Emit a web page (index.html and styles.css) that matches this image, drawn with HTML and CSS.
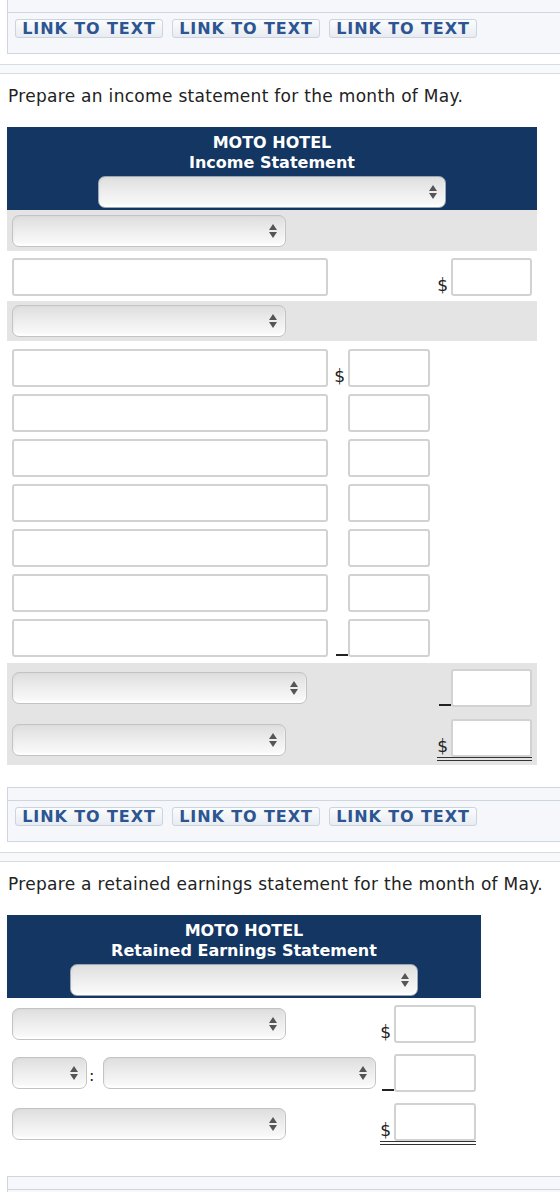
FILE: index.html
```html
<!DOCTYPE html>
<html lang="en">
<head>
<meta charset="utf-8">
<title>Moto Hotel statements</title>
<link rel="stylesheet" href="styles.css">
</head>
<body>

<div class="toolbar toolbar-first">
  <div class="toolbar-strip"></div>
  <div class="toolbar-links">
    <button class="link-btn">LINK TO TEXT</button>
    <button class="link-btn">LINK TO TEXT</button>
    <button class="link-btn">LINK TO TEXT</button>
  </div>
</div>
<div class="band"></div>

<p class="prompt">Prepare an income statement for the month of May.</p>

<div class="stmt stmt-income">
  <div class="stmt-head">
    <div class="title">MOTO HOTEL</div>
    <div class="title">Income Statement</div>
    <div class="select select-head">
      <svg class="arrows" viewBox="0 0 8 14" width="8" height="14"><path d="M0 6 4 0 8 6z M0 8 4 14 8 8z"/></svg>
    </div>
  </div>

  <div class="grow row-sel">
    <div class="select select-md">
      <svg class="arrows" viewBox="0 0 8 14" width="8" height="14"><path d="M0 6 4 0 8 6z M0 8 4 14 8 8z"/></svg>
    </div>
  </div>

  <div class="grid row-first">
    <div class="c-label"><input class="field field-label" type="text"></div>
    <div class="c-amt c-mid"></div>
    <div class="c-amt c-right"><span class="dollar">$</span><input class="field field-amt" type="text"></div>
  </div>

  <div class="grow row-sel row-sel2">
    <div class="select select-md">
      <svg class="arrows" viewBox="0 0 8 14" width="8" height="14"><path d="M0 6 4 0 8 6z M0 8 4 14 8 8z"/></svg>
    </div>
  </div>

  <div class="lines">
    <div class="grid">
      <div class="c-label"><input class="field field-label" type="text"></div>
      <div class="c-amt c-mid"><span class="dollar">$</span><input class="field field-mid" type="text"></div>
      <div class="c-amt c-right"></div>
    </div>
    <div class="grid">
      <div class="c-label"><input class="field field-label" type="text"></div>
      <div class="c-amt c-mid"><input class="field field-mid" type="text"></div>
      <div class="c-amt c-right"></div>
    </div>
    <div class="grid">
      <div class="c-label"><input class="field field-label" type="text"></div>
      <div class="c-amt c-mid"><input class="field field-mid" type="text"></div>
      <div class="c-amt c-right"></div>
    </div>
    <div class="grid">
      <div class="c-label"><input class="field field-label" type="text"></div>
      <div class="c-amt c-mid"><input class="field field-mid" type="text"></div>
      <div class="c-amt c-right"></div>
    </div>
    <div class="grid">
      <div class="c-label"><input class="field field-label" type="text"></div>
      <div class="c-amt c-mid"><input class="field field-mid" type="text"></div>
      <div class="c-amt c-right"></div>
    </div>
    <div class="grid">
      <div class="c-label"><input class="field field-label" type="text"></div>
      <div class="c-amt c-mid"><input class="field field-mid" type="text"></div>
      <div class="c-amt c-right"></div>
    </div>
    <div class="grid">
      <div class="c-label"><input class="field field-label" type="text"></div>
      <div class="c-amt c-mid"><span class="minus"></span><input class="field field-mid" type="text"></div>
      <div class="c-amt c-right"></div>
    </div>
  </div>

  <div class="totals">
    <div class="total-row">
      <div class="select select-lg">
        <svg class="arrows" viewBox="0 0 8 14" width="8" height="14"><path d="M0 6 4 0 8 6z M0 8 4 14 8 8z"/></svg>
      </div>
      <div class="amt"><span class="minus"></span><input class="field field-amt" type="text"></div>
    </div>
    <div class="total-row">
      <div class="select select-md">
        <svg class="arrows" viewBox="0 0 8 14" width="8" height="14"><path d="M0 6 4 0 8 6z M0 8 4 14 8 8z"/></svg>
      </div>
      <div class="amt amt-total"><span class="dollar">$</span><input class="field field-amt" type="text"></div>
    </div>
  </div>
</div>

<div class="toolbar toolbar-next">
  <div class="toolbar-strip"></div>
  <div class="toolbar-links">
    <button class="link-btn">LINK TO TEXT</button>
    <button class="link-btn">LINK TO TEXT</button>
    <button class="link-btn">LINK TO TEXT</button>
  </div>
</div>
<div class="band"></div>

<p class="prompt">Prepare a retained earnings statement for the month of May.</p>

<div class="stmt stmt-re">
  <div class="stmt-head">
    <div class="title">MOTO HOTEL</div>
    <div class="title">Retained Earnings Statement</div>
    <div class="select select-head">
      <svg class="arrows" viewBox="0 0 8 14" width="8" height="14"><path d="M0 6 4 0 8 6z M0 8 4 14 8 8z"/></svg>
    </div>
  </div>

  <div class="re-rows">
    <div class="re-row">
      <div class="re-left">
        <div class="select select-md">
          <svg class="arrows" viewBox="0 0 8 14" width="8" height="14"><path d="M0 6 4 0 8 6z M0 8 4 14 8 8z"/></svg>
        </div>
      </div>
      <div class="amt"><span class="dollar">$</span><input class="field field-mid" type="text"></div>
    </div>
    <div class="re-row">
      <div class="re-left">
        <div class="select select-xs">
          <svg class="arrows" viewBox="0 0 8 14" width="8" height="14"><path d="M0 6 4 0 8 6z M0 8 4 14 8 8z"/></svg>
        </div>
        <span class="colon">:</span>
        <div class="select select-wide">
          <svg class="arrows" viewBox="0 0 8 14" width="8" height="14"><path d="M0 6 4 0 8 6z M0 8 4 14 8 8z"/></svg>
        </div>
      </div>
      <div class="amt"><span class="minus"></span><input class="field field-mid" type="text"></div>
    </div>
    <div class="re-row">
      <div class="re-left">
        <div class="select select-md">
          <svg class="arrows" viewBox="0 0 8 14" width="8" height="14"><path d="M0 6 4 0 8 6z M0 8 4 14 8 8z"/></svg>
        </div>
      </div>
      <div class="amt amt-total"><span class="dollar">$</span><input class="field field-mid" type="text"></div>
    </div>
  </div>
</div>

<div class="toolbar toolbar-last">
  <div class="toolbar-strip"></div>
  <div class="toolbar-links"></div>
</div>

</body>
</html>
```

FILE: styles.css
```css
* { box-sizing: border-box; }

html { overflow: hidden; }

body {
  margin: 0;
  width: 560px;
  background: #fff;
  color: #222;
  font-family: "DejaVu Sans", Verdana, sans-serif;
}

/* Link toolbar above each exercise */
.toolbar {
  margin-left: 7px;
  background: #f5f7fa;
  border: 1px solid #cdd6e1;
  border-right: 0;
}
.toolbar-first { border-top: 0; }
.toolbar-next { margin-top: 22px; }
.toolbar-last { margin-top: 31px; }

.toolbar-strip {
  height: 13px;
  border-bottom: 1px solid #cdd6e1;
}

.toolbar-links {
  display: flex;
  gap: 9px;
  min-height: 40px;
  padding: 6px 0 15px 7px;
}

.link-btn {
  height: 19px;
  width: 148px;
  padding: 0;
  border: 1px solid #cbd4df;
  border-radius: 3px;
  background: linear-gradient(#fbfcfd, #e8ecf1);
  color: #2c5592;
  font-family: "DejaVu Sans", Verdana, sans-serif;
  font-weight: bold;
  font-size: 16px;
  letter-spacing: 0.9px;
  line-height: 17px;
  text-align: center;
  white-space: nowrap;
}

.band {
  margin-top: 10px;
  height: 10px;
  background: #f7f9fb;
  border-top: 1px solid #d4dce6;
  border-bottom: 1px solid #d4dce6;
}

.prompt {
  margin: 12px 0 21px 8px;
  font-size: 17px;
  letter-spacing: 0.3px;
  line-height: 20px;
}

/* Statement blocks */
.stmt { margin-left: 7px; }
.stmt-income { width: 530px; }
.stmt-re { width: 474px; }

.stmt-head {
  background: #133662;
  color: #fff;
  text-align: center;
  padding: 6px 0 2px;
}
.title {
  font-weight: bold;
  font-size: 16px;
  line-height: 20px;
}

/* Drop-down look-alike */
.select {
  display: flex;
  align-items: center;
  justify-content: flex-end;
  height: 32px;
  padding-right: 8px;
  border: 1px solid #c3c3c3;
  border-radius: 7px;
  background: linear-gradient(#dedede, #efefef 55%, #fbfbfb);
  box-shadow: inset 0 -2px 2px #fff, inset 1px 0 2px rgba(0,0,0,0.06);
}
.arrows { fill: #555; display: block; }

.select-head { width: 348px; margin: 3px auto 0; }
.stmt-head .select { border-color: #9aa6b5; }
.select-md { width: 274px; }
.select-lg { width: 295px; }
.select-xs { width: 75px; }
.select-wide { width: 273px; }

/* Text fields */
.field {
  display: block;
  margin: 0;
  height: 38px;
  border: 2px solid #d2d2d2;
  border-radius: 3px;
  background: #fff;
  font: 14px "DejaVu Sans", Verdana, sans-serif;
}
.field-label { width: 316px; }
.field-mid { width: 82px; }
.field-amt { width: 81px; }

.dollar {
  font-size: 17px;
  line-height: 17px;
  margin: 0 3px 2px 0;
}
.minus {
  width: 12px;
  height: 2px;
  margin-bottom: 1px;
  background: #222;
}

/* Income statement rows */
.grow {
  display: flex;
  align-items: center;
  padding-left: 5px;
  background: #e4e4e4;
}
.row-sel { height: 41px; }
.row-sel2 { height: 40px; }

.grid {
  display: grid;
  grid-template-columns: 325px 100px 105px;
}
.row-first { padding: 7px 0 5px; }

.c-label { padding-left: 5px; }
.c-amt {
  display: flex;
  align-items: flex-end;
  justify-content: flex-end;
}
.c-mid { padding-right: 2px; }
.c-right { padding-right: 5px; }

.lines {
  display: flex;
  flex-direction: column;
  gap: 7px;
  padding: 8px 0 6px;
}

.totals {
  display: flex;
  flex-direction: column;
  gap: 12px;
  padding: 6px 5px 4px;
  background: #e4e4e4;
}
.total-row {
  display: flex;
  align-items: center;
  justify-content: space-between;
}

.amt {
  display: flex;
  align-items: flex-end;
}
.amt-total { border-bottom: 4px double #333; }

/* Retained earnings rows */
.re-rows {
  display: flex;
  flex-direction: column;
  gap: 11px;
  padding: 7px 5px 0;
}
.re-row {
  display: flex;
  align-items: center;
  justify-content: space-between;
}
.re-left {
  display: flex;
  align-items: center;
}
.colon {
  width: 16px;
  padding-left: 2px;
  font-size: 16px;
  line-height: 18px;
  align-self: flex-end;
  margin-bottom: 4px;
}
```
